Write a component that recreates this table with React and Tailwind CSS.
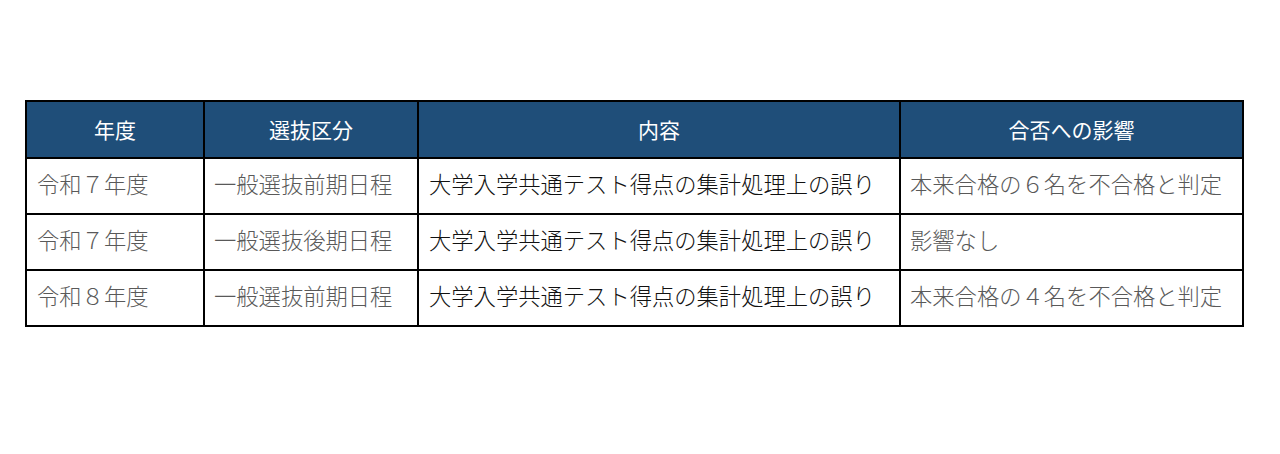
import React from "react";

const rows = [
  ["令和７年度", "一般選抜前期日程", "大学入学共通テスト得点の集計処理上の誤り", "本来合格の６名を不合格と判定"],
  ["令和７年度", "一般選抜後期日程", "大学入学共通テスト得点の集計処理上の誤り", "影響なし"],
  ["令和８年度", "一般選抜前期日程", "大学入学共通テスト得点の集計処理上の誤り", "本来合格の４名を不合格と判定"],
];

const headers = ["年度", "選抜区分", "内容", "合否への影響"];

export default function App() {
  return (
    <div
      className="w-[1280px] h-[454px] bg-white pt-[100px] pl-[25px]"
      style={{ fontFamily: '"Liberation Serif", "Noto Sans CJK JP", serif' }}
    >
      <table className="w-[1217px] border-collapse border-2 border-black table-fixed">
        <colgroup>
          <col className="w-[178px]" />
          <col className="w-[214px]" />
          <col className="w-[482px]" />
          <col className="w-[343px]" />
        </colgroup>
        <thead>
          <tr className="h-[57px] bg-[#1f4e79]">
            {headers.map((h) => (
              <th
                key={h}
                className="border-2 border-black text-white text-[21px] font-normal text-center"
                style={{ fontFamily: '"Noto Sans CJK JP", sans-serif' }}
              >
                {h}
              </th>
            ))}
          </tr>
        </thead>
        <tbody>
          {rows.map((r, i) => (
            <tr key={i} className="h-[56px]">
              <td className="border-2 border-black pl-[10px] text-[22.3px] text-[#595959] font-light">{r[0]}</td>
              <td className="border-2 border-black pl-[9px] text-[22.3px] text-[#595959] font-light">{r[1]}</td>
              <td className="border-2 border-black pl-[10px] text-[22.3px] text-[#111] font-light">{r[2]}</td>
              <td className="border-2 border-black pl-[9px] text-[22.3px] text-[#595959] font-light">{r[3]}</td>
            </tr>
          ))}
        </tbody>
      </table>
    </div>
  );
}
